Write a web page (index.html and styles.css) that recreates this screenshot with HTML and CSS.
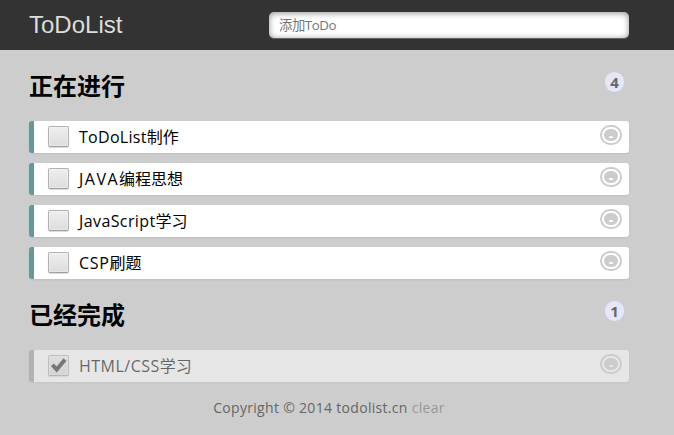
FILE: index.html
```
<!DOCTYPE html>
<html lang="zh-CN">
<head>
<meta charset="utf-8">
<title>ToDoList</title>
<link rel="stylesheet" href="styles.css">
</head>
<body>
<header class="topbar">
  <div class="wrap topbar-inner">
    <label class="brand" for="title">ToDoList</label>
    <input class="add" id="title" type="text" placeholder="添加ToDo">
  </div>
</header>
<main class="wrap">
  <section>
    <div class="heading"><h2>正在进行</h2><span class="count">4</span></div>
    <ul class="list">
      <li class="item"><span class="box"></span><p class="t-make"><span>ToDoList</span>制作</p><a class="del">-</a></li>
      <li class="item"><span class="box"></span><p class="t-java"><span>JAVA</span>编程思想</p><a class="del">-</a></li>
      <li class="item"><span class="box"></span><p class="t-script"><span>JavaScript</span>学习</p><a class="del">-</a></li>
      <li class="item"><span class="box"></span><p class="t-csp"><span>CSP</span>刷题</p><a class="del">-</a></li>
    </ul>
  </section>
  <section>
    <div class="heading"><h2>已经完成</h2><span class="count">1</span></div>
    <ul class="list">
      <li class="item done"><span class="box"><svg width="17" height="17" viewBox="0 0 17 17"><path d="M1 9.3 3.8 6.5 6.6 9.4 13.6 1.2 16.4 4 6.8 15.6Z" fill="#222"/></svg></span><p class="t-html"><span>HTML/CSS</span>学习</p><a class="del">-</a></li>
    </ul>
  </section>
</main>
<footer class="footer">Copyright © 2014 todolist.cn <a class="clear">clear</a></footer>
</body>
</html>
```
FILE: styles.css
```
* { box-sizing: border-box; }
body {
  margin: 0;
  background: #cdcdcd;
  font: 16px "Open Sans", "Noto Sans CJK SC", sans-serif;
  color: #000;
}
.topbar { height: 50px; background: #333; }
.wrap { width: 600px; margin-left: 29px; }
.topbar-inner { display: flex; align-items: center; justify-content: space-between; height: 50px; }
.brand { font: 24px/50px "Liberation Sans", sans-serif; color: #ddd; }
.add {
  width: 360px;
  height: 26px;
  padding: 0 10px;
  border: 0;
  border-radius: 5px;
  background: #fff;
  box-shadow: 0 1px 0 rgba(255,255,255,.24), 0 1px 6px rgba(0,0,0,.45) inset;
  font: 13.333px "Open Sans", "Noto Sans CJK SC", sans-serif;
  letter-spacing: -.45px;
}
.add::placeholder { color: #757575; }
.heading { display: flex; justify-content: space-between; height: 71px; padding: 20px 5px 0 0; }
h2 { margin: 0; font-size: 24px; line-height: 32px; font-weight: 700; }
.count {
  width: 19px;
  height: 20px;
  margin-top: 2px;
  border-radius: 20px;
  background: #e6e6fa;
  color: #666;
  font-size: 15px;
  line-height: 20px;
  font-weight: 700;
  text-align: center;
}
.list { margin: 0; padding: 0; list-style: none; }
.item {
  display: flex;
  align-items: flex-start;
  height: 32px;
  padding: 0 5px 0 14px;
  border-left: 5px solid #629a9c;
  border-radius: 3px;
  background: #fff;
  box-shadow: 0 1px 2px rgba(0,0,0,.07);
}
.item + .item { margin-top: 10px; }
.item p { flex: 1; margin: 0 0 0 10px; line-height: 32px; white-space: nowrap; }
.t-make span { letter-spacing: .3px; }
.t-java span { letter-spacing: 1.5px; }
.t-script span { letter-spacing: .4px; }
.t-csp span { letter-spacing: .7px; }
.t-html span { letter-spacing: .5px; }
.box {
  display: flex;
  align-items: center;
  justify-content: center;
  width: 21px;
  height: 21px;
  margin-top: 5px;
  border: 1px solid #b2b2b2;
  border-bottom-color: #a0a0a0;
  border-radius: 2px;
  background: linear-gradient(#eee, #ddd);
  box-shadow: inset 0 0 0 1px rgba(255,255,255,.3), 0 1px 1px rgba(0,0,0,.15);
}
.del {
  width: 26px;
  height: 24px;
  margin-top: 2px;
  border: 6px double #fff;
  border-radius: 14px;
  background: #ccc;
  color: #fff;
  font-size: 14px;
  line-height: 14px;
  font-weight: 700;
  text-align: center;
}
.done { border-left-color: #999; opacity: .5; }
.footer { width: 658px; padding-top: 16px; text-align: center; color: #666; font-size: 14px; line-height: 20px; letter-spacing: .31px; }
.clear { color: #999; }
```
